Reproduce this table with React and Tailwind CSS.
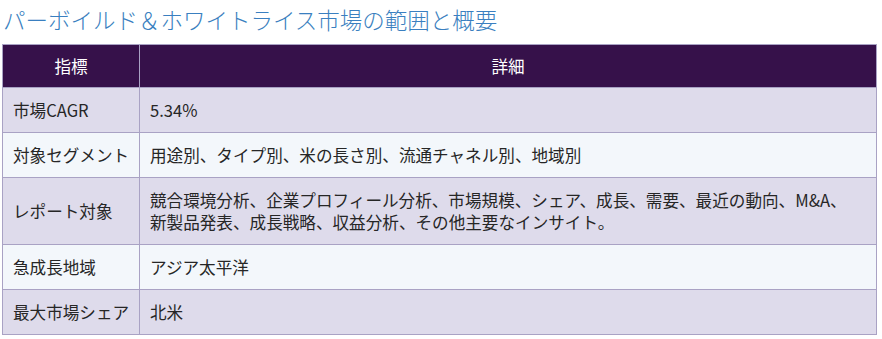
import React from "react";

const rows = [
  ["市場CAGR", "5.34%"],
  ["対象セグメント", "用途別、タイプ別、米の長さ別、流通チャネル別、地域別"],
  [
    "レポート対象",
    <>
      <span className="whitespace-nowrap">
        競合環境分析、企業プロフィール分析、市場規模、シェア、成長、需要、最近の動向、M&A、
      </span>
      <br />
      <span className="whitespace-nowrap">
        新製品発表、成長戦略、収益分析、その他主要なインサイト。
      </span>
    </>,
  ],
  ["急成長地域", "アジア太平洋"],
  ["最大市場シェア", "北米"],
];

export default function App() {
  return (
    <div
      className="w-[882px] h-[339px] bg-white pl-[2px] pr-[5px] pt-[4px]"
      style={{ fontFamily: '"Noto Sans CJK JP", "Noto Sans", sans-serif' }}
    >
      <h2 className="text-[22.5px] leading-[30px] text-[#3a7fc0] font-light pl-[1px] mb-[10px]">
        パーボイルド＆ホワイトライス市場の範囲と概要
      </h2>
      <table className="w-full table-fixed border-collapse text-[16.6px] leading-[22px]">
        <colgroup>
          <col className="w-[137px]" />
          <col />
        </colgroup>
        <thead>
          <tr className="bg-[#36114a] text-white">
            <th className="border border-[#a9a2c4] py-[10px] px-[10px] font-normal text-center">
              指標
            </th>
            <th className="border border-[#a9a2c4] py-[10px] px-[10px] font-normal text-center">
              詳細
            </th>
          </tr>
        </thead>
        <tbody className="text-[#262626]">
          {rows.map(([k, v], i) => (
            <tr
              key={i}
              className={i % 2 === 0 ? "bg-[#dedbeb]" : "bg-[#f3f7fb]"}
            >
              <td className="border border-[#a9a2c4] py-[11px] pl-[10px] pr-0 whitespace-nowrap align-middle overflow-visible">
                {k}
              </td>
              <td className="border border-[#a9a2c4] py-[11px] px-[10px] align-middle">
                {v}
              </td>
            </tr>
          ))}
        </tbody>
      </table>
    </div>
  );
}
